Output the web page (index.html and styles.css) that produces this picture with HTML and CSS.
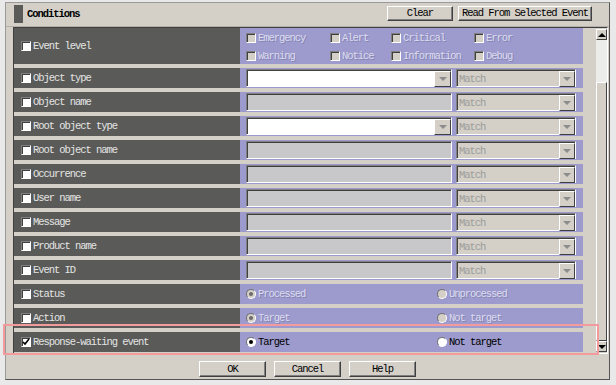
FILE: index.html
```html
<!DOCTYPE html>
<html lang="en">
<head>
    <meta charset="UTF-8">
    <title>Conditions</title>
    <link rel="stylesheet" href="styles.css">
</head>
<body>
    <div class="window">
        <div class="header">
            <span class="marker"></span>
            <span class="title">Conditions</span>
            <button class="btn btn-clear">Clear</button>
            <button class="btn btn-read">Read From Selected Event</button>
        </div>
        <div class="pane">
            <div class="rows">
                <div class="row row-level">
                    <div class="label"><span class="check"></span>Event level</div>
                    <div class="field">
                        <div class="levels">
                            <span class="opt"><span class="check off"></span>Emergency</span>
                            <span class="opt"><span class="check off"></span>Alert</span>
                            <span class="opt"><span class="check off"></span>Critical</span>
                            <span class="opt"><span class="check off"></span>Error</span>
                            <span class="opt"><span class="check off"></span>Warning</span>
                            <span class="opt"><span class="check off"></span>Notice</span>
                            <span class="opt"><span class="check off"></span>Information</span>
                            <span class="opt"><span class="check off"></span>Debug</span>
                        </div>
                    </div>
                </div>
                <div class="row">
                    <div class="label"><span class="check"></span>Object type</div>
                    <div class="field">
                        <div class="combo"><span class="drop"><i class="tri"></i></span></div>
                        <div class="match">Match<span class="drop"><i class="tri"></i></span></div>
                    </div>
                </div>
                <div class="row">
                    <div class="label"><span class="check"></span>Object name</div>
                    <div class="field">
                        <div class="text"></div>
                        <div class="match">Match<span class="drop"><i class="tri"></i></span></div>
                    </div>
                </div>
                <div class="row">
                    <div class="label"><span class="check"></span>Root object type</div>
                    <div class="field">
                        <div class="combo"><span class="drop"><i class="tri"></i></span></div>
                        <div class="match">Match<span class="drop"><i class="tri"></i></span></div>
                    </div>
                </div>
                <div class="row">
                    <div class="label"><span class="check"></span>Root object name</div>
                    <div class="field">
                        <div class="text"></div>
                        <div class="match">Match<span class="drop"><i class="tri"></i></span></div>
                    </div>
                </div>
                <div class="row">
                    <div class="label"><span class="check"></span>Occurrence</div>
                    <div class="field">
                        <div class="text"></div>
                        <div class="match">Match<span class="drop"><i class="tri"></i></span></div>
                    </div>
                </div>
                <div class="row">
                    <div class="label"><span class="check"></span>User name</div>
                    <div class="field">
                        <div class="text"></div>
                        <div class="match">Match<span class="drop"><i class="tri"></i></span></div>
                    </div>
                </div>
                <div class="row">
                    <div class="label"><span class="check"></span>Message</div>
                    <div class="field">
                        <div class="text"></div>
                        <div class="match">Match<span class="drop"><i class="tri"></i></span></div>
                    </div>
                </div>
                <div class="row">
                    <div class="label"><span class="check"></span>Product name</div>
                    <div class="field">
                        <div class="text"></div>
                        <div class="match">Match<span class="drop"><i class="tri"></i></span></div>
                    </div>
                </div>
                <div class="row">
                    <div class="label"><span class="check"></span>Event ID</div>
                    <div class="field">
                        <div class="text"></div>
                        <div class="match">Match<span class="drop"><i class="tri"></i></span></div>
                    </div>
                </div>
                <div class="row">
                    <div class="label"><span class="check"></span>Status</div>
                    <div class="field">
                        <div class="radios">
                            <span class="opt"><span class="radio off on"></span>Processed</span>
                            <span class="opt"><span class="radio off"></span>Unprocessed</span>
                        </div>
                    </div>
                </div>
                <div class="row">
                    <div class="label"><span class="check"></span>Action</div>
                    <div class="field">
                        <div class="radios">
                            <span class="opt"><span class="radio off on"></span>Target</span>
                            <span class="opt"><span class="radio off"></span>Not target</span>
                        </div>
                    </div>
                </div>
                <div class="row">
                    <div class="label"><span class="check checked"><svg width="8" height="8" viewBox="0 0 8 8"><path d="M1 4 L3 6 L7 1" fill="none" stroke="#000" stroke-width="1.6"/></svg></span>Response-waiting event</div>
                    <div class="field">
                        <div class="radios active">
                            <span class="opt"><span class="radio on"></span>Target</span>
                            <span class="opt"><span class="radio"></span>Not target</span>
                        </div>
                    </div>
                </div>
            </div>
            <div class="scrollbar">
                <span class="sb-btn"><i class="tri up"></i></span>
                <div class="track"><div class="thumb"></div></div>
                <span class="sb-btn"><i class="tri dark"></i></span>
            </div>
        </div>
        <div class="footer">
            <button class="btn btn-foot">OK</button>
            <button class="btn btn-foot">Cancel</button>
            <button class="btn btn-foot">Help</button>
        </div>
    </div>
    <div class="highlight"></div>
</body>
</html>
```

FILE: styles.css
```css
* {
    box-sizing: border-box;
}
body {
    margin: 0;
    background-color: #e9e9e9;
    font-family: "Liberation Mono", "DejaVu Sans Mono", monospace;
    font-size: 10.5px;
    letter-spacing: -1.05px;
    position: relative;
    height: 385px;
    overflow: hidden;
}
.window {
    margin: 2px 0 0 5px;
    width: 605px;
    height: 378px;
    background-color: #d4d0c8;
    border: 1px solid #9a9a9a;
    border-right-color: #555;
    border-bottom-color: #555;
    display: flex;
    flex-direction: column;
}
.header {
    height: 24px;
    display: flex;
    align-items: flex-start;
    padding: 2px 17px 0 8px;
    border-bottom: 1px solid #b4b0a8;
}
.marker {
    width: 9px;
    height: 18px;
    background-color: #5a5b58;
}
.title {
    margin-left: 4px;
    font-weight: bold;
    line-height: 19px;
    color: #000;
}
.btn {
    font-family: inherit;
    font-size: 10.5px;
    letter-spacing: -1.05px;
    color: #000;
    background-color: #d4d0c8;
    border: 1px solid;
    border-color: #fff #404040 #404040 #fff;
    box-shadow: inset -1px -1px 0 #808080;
    padding: 0;
    line-height: 13px;
}
.btn-clear {
    margin: 1px 0 0 auto;
    width: 66px;
    height: 15px;
}
.btn-read {
    margin: 1px 0 0 5px;
    width: 134px;
    height: 15px;
}
.pane {
    margin-left: 7px;
    width: 595px;
    height: 327px;
    border: 1px solid;
    border-color: #404040 #fff #fff #404040;
    display: flex;
}
.rows {
    width: 569px;
    display: flex;
    flex-direction: column;
    gap: 4px;
}
.row {
    height: 20px;
    display: flex;
}
.row-level {
    height: 36px;
}
.label {
    width: 226px;
    background-color: #5a5b58;
    color: #e4e4e4;
    display: flex;
    align-items: center;
    padding-left: 7px;
}
.field {
    flex: 1;
    background-color: #9d9bcd;
    display: flex;
    align-items: center;
    padding-left: 6px;
}
.check {
    width: 10px;
    height: 10px;
    margin-right: 2px;
    background-color: #fff;
    border: 1px solid;
    border-color: #808080 #fff #fff #808080;
    box-shadow: inset 1px 1px 0 #404040;
    display: flex;
    align-items: center;
    justify-content: center;
}
.check.off {
    background-color: #d4d0c8;
}
.levels {
    display: grid;
    grid-template-columns: 84px 61px 83px auto;
    grid-auto-rows: 18px;
    align-items: center;
    align-self: flex-start;
    padding-top: 1px;
}
.opt {
    display: flex;
    align-items: center;
    color: #dcdcef;
    text-shadow: 1px 1px 0 #8584b4;
}
.combo, .text {
    width: 206px;
    height: 18px;
    border: 1px solid;
    border-color: #808080 #fff #fff #808080;
    box-shadow: inset 1px 1px 0 #404040;
    display: flex;
    justify-content: flex-end;
    padding: 1px 0 0 1px;
}
.combo {
    background-color: #fff;
}
.text {
    background-color: #c8c7ca;
}
.match {
    width: 120px;
    height: 18px;
    margin-left: 4px;
    background-color: #d4d0c8;
    border: 1px solid;
    border-color: #808080 #fff #fff #808080;
    box-shadow: inset 1px 1px 0 #404040;
    color: #9c9c9c;
    display: flex;
    align-items: center;
    justify-content: space-between;
    padding: 1px 0 0 2px;
}
.drop {
    width: 17px;
    height: 16px;
    background-color: #d4d0c8;
    border: 1px solid;
    border-color: #fff #404040 #404040 #fff;
    display: flex;
    align-items: center;
    justify-content: center;
}
.match .drop {
    width: 16px;
}
.tri {
    width: 0;
    height: 0;
    border-left: 4px solid transparent;
    border-right: 4px solid transparent;
    border-top: 4px solid #8c8c8c;
}
.tri.dark {
    border-top-color: #000;
}
.tri.up {
    border-top: none;
    border-bottom: 4px solid #000;
}
.radios {
    display: grid;
    grid-template-columns: 191px auto;
    align-items: center;
}
.radio {
    width: 10px;
    height: 10px;
    margin-right: 2px;
    border-radius: 50%;
    background-color: #fff;
    border: 1px solid;
    border-color: #707070 #fff #fff #707070;
    display: flex;
    align-items: center;
    justify-content: center;
}
.radio.off {
    background-color: #d4d0c8;
}
.radio.on::after {
    content: "";
    width: 4px;
    height: 4px;
    border-radius: 50%;
    background-color: #000;
}
.radio.off.on::after {
    background-color: #6a6a6a;
}
.radios.active .opt {
    color: #000;
    text-shadow: none;
}
.scrollbar {
    margin-left: 13px;
    width: 11px;
    padding: 1px 0;
    display: flex;
    flex-direction: column;
}
.sb-btn {
    height: 11px;
    background-color: #d4d0c8;
    border: 1px solid;
    border-color: #fff #404040 #404040 #fff;
    display: flex;
    align-items: center;
    justify-content: center;
}
.track {
    flex: 1;
    background-color: #ececea;
    padding-top: 42px;
    display: flex;
    flex-direction: column;
}
.thumb {
    flex: 1;
    background-color: #d4d0c8;
    border: 1px solid;
    border-color: #fff #404040 #404040 #fff;
}
.footer {
    display: flex;
    justify-content: center;
    gap: 8px;
    padding-top: 7px;
}
.btn-foot {
    width: 67px;
    height: 16px;
}
.highlight {
    position: absolute;
    left: 3px;
    top: 324px;
    width: 596px;
    height: 31px;
    border: 2px solid #f29a9c;
    pointer-events: none;
}
```
